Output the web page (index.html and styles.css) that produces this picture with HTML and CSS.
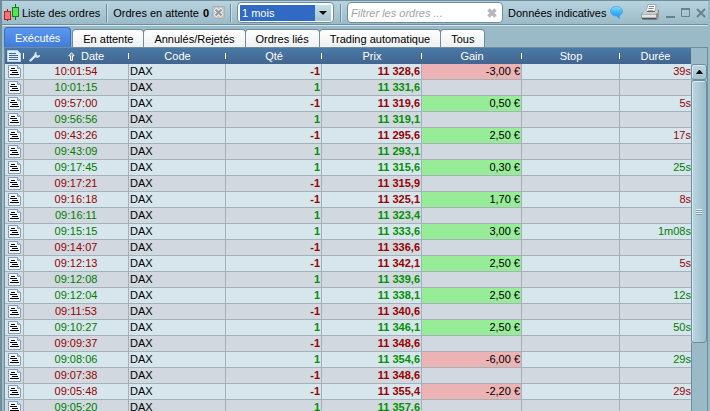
FILE: index.html
```html
<!DOCTYPE html>
<html lang="fr">
<head>
  <meta charset="UTF-8" />
  <meta name="viewport" content="width=device-width, initial-scale=1.0"/>
  <title>Liste des ordres</title>
  <link rel="stylesheet" href="styles.css">
</head>
<body>

  <svg class="defs" aria-hidden="true">
    <symbol id="note" viewBox="0 0 13 13">
      <path d="M.5.5h9l3 3v9H.5z" fill="#f3f8fc" stroke="#7d9fc6"/>
      <path d="M9.5.5v3h3" fill="#c5d8ec" stroke="#7d9fc6"/>
      <path d="M3 3.500h4M2 5.500h7M4 7.500h6M2 9.500h9" stroke="#000"/>
    </symbol>
  </svg>

  <header class="toolbar">
    <svg class="candles" width="16" height="18" viewBox="0 0 16 18">
      <path d="M3.500 5v12" stroke="#a01818"/>
      <rect x=".5" y="7.500" width="6" height="8" fill="#f47474" stroke="#b02020"/>
      <path d="M11.500 0v16" stroke="#107010"/>
      <rect x="8.500" y="3.500" width="6" height="9" fill="#55e455" stroke="#158015"/>
    </svg>
    <h1>Liste des ordres</h1>
    <span class="sep"></span>
    <span>Ordres en attente</span>
    <b class="count">0</b>
    <button class="cancel" aria-label="Annuler les ordres">
      <svg width="13" height="13" viewBox="0 0 13 13">
        <rect x=".5" y=".5" width="12" height="12" rx="1" fill="#bcc2c5" stroke="#a9afb2"/>
        <path d="M3 3l7 7M10 3l-7 7" stroke="#f4f5f5" stroke-width="4"/>
        <path d="M3.500 3.500l6 6M9.500 3.500l-6 6" stroke="#969b9e" stroke-width="2.400"/>
      </svg>
    </button>
    <span class="sep"></span>
    <div class="period">
      <select aria-label="Période">
        <option>1 mois</option>
        <option>3 mois</option>
      </select>
      <svg width="16" height="16" viewBox="0 0 16 16"><path d="M4 6h8l-4 4z" fill="#000"/></svg>
    </div>
    <span class="sep"></span>
    <div class="filter">
      <input type="text" placeholder="Filtrer les ordres ..." aria-label="Filtrer les ordres">
      <button aria-label="Effacer">
        <svg width="10" height="10" viewBox="0 0 10 10"><path d="M1.500 1.500l7 7M8.500 1.500l-7 7" stroke="#b5b9bb" stroke-width="3.400"/></svg>
      </button>
    </div>
    <span class="feed">Données indicatives</span>
    <svg class="bubble" width="13" height="13" viewBox="0 0 13 13">
      <defs>
        <linearGradient id="blue" x1="0" y1="0" x2="0" y2="1">
          <stop offset="0" stop-color="#8adcff"/>
          <stop offset=".45" stop-color="#45b4f4"/>
          <stop offset="1" stop-color="#1898ea"/>
        </linearGradient>
      </defs>
      <path d="M6.500.5c3.400 0 6 2 6 4.800 0 2-1.300 3.500-3.200 4.300V12.500L6.500 10C3.100 10 .5 8.100.5 5.300S3.100.5 6.500.5z" fill="url(#blue)" stroke="#2e9fe6" stroke-width=".6"/>
    </svg>
    <div class="window-buttons">
      <button aria-label="Imprimer">
        <svg width="19" height="17" viewBox="0 0 19 17">
          <path d="M5 8L7 .5h8L14 8z" fill="#fff" stroke="#8b9296" stroke-width=".7"/>
          <path d="M8 2.500h5M7.500 4.500h5M7 6.500h5" stroke="#80878b"/>
          <path d="M3.500 7h13l1.500-2v7l-2 4H2L.5 14V9.500z" fill="#777c7e"/>
          <path d="M3.500 6.500h12L18 8l-3 2H.8z" fill="#c9cccc"/>
          <path d="M6 7.500h8" stroke="#666"/>
          <path d="M1 10.500h14v3H1z" fill="#e4e6e5"/>
          <path d="M1 14.500h14" stroke="#555"/>
          <path d="M15 10.500l3-3v5l-3 3z" fill="#97908a"/>
        </svg>
      </button>
      <button aria-label="Réduire">
        <svg width="9" height="11" viewBox="0 0 9 11"><path d="M0 10h9" stroke="#68818d" stroke-width="2"/></svg>
      </button>
      <button aria-label="Agrandir">
        <svg width="9" height="11" viewBox="0 0 9 11"><path d="M.5 1.500h8v8h-8z" fill="none" stroke="#68818d"/><path d="M0 2h9" stroke="#68818d" stroke-width="2"/></svg>
      </button>
      <button aria-label="Fermer">
        <svg width="10" height="10" viewBox="0 0 10 10"><path d="M1 1l8 8M9 1l-8 8" stroke="#68818d" stroke-width="2"/></svg>
      </button>
    </div>
  </header>

  <nav class="tabs">
    <button class="tab active">Exécutés</button>
    <button class="tab">En attente</button>
    <button class="tab">Annulés/Rejetés</button>
    <button class="tab">Ordres liés</button>
    <button class="tab">Trading automatique</button>
    <button class="tab">Tous</button>
  </nav>

  <main class="panel">
    <div class="list">
      <table>
        <colgroup>
          <col class="c-note"><col class="c-date"><col class="c-code"><col class="c-qty">
          <col class="c-price"><col class="c-gain"><col class="c-stop"><col>
        </colgroup>
        <thead>
          <tr>
            <th aria-label="Note">
              <svg width="14" height="12" viewBox="0 0 14 12">
                <path d="M.5.5h10l3 3v8H.5z" fill="#e4eef8" stroke="#b9d2ea"/>
                <path d="M2 3.500h7M2 5.500h9M2 7.500h9M2 9.500h9" stroke="#3e6696"/>
              </svg>
            </th>
            <th>
              <div class="date-head">
                <svg width="12" height="11" viewBox="0 0 12 11">
                  <path d="M1.500 9.500l5-5" stroke="#dbe8f4" stroke-width="2.400" stroke-linecap="round"/>
                  <path d="M7.500.7v3l1.200.9 2.300-.6c.3 1.700-1.200 3-3 2.800C6 6.600 5 5 5.400 3.200 5.700 1.800 6.500 1 7.500.7z" fill="#dbe8f4"/>
                </svg>
                <svg class="sort" width="7" height="9" viewBox="0 0 7 9"><path d="M3.500.7l2.700 3.100H4.500v4.500h-2V3.800H.8z" fill="#6e90b5" stroke="#fff"/></svg>
                <span>Date</span>
              </div>
            </th>
            <th>Code</th>
            <th>Qté</th>
            <th>Prix</th>
            <th>Gain</th>
            <th>Stop</th>
            <th>Durée</th>
          </tr>
        </thead>
        <tbody id="orders"></tbody>
      </table>
    </div>
    <div class="scrollbar">
      <div class="scroll-up"><svg width="7" height="4" viewBox="0 0 7 4"><path d="M0 4h7L4 0H3z" fill="#000"/></svg></div>
      <div class="thumb">
        <svg width="6" height="6" viewBox="0 0 6 6"><path d="M0 .5h6M0 2.500h6M0 4.500h6" stroke="#e4f1f6"/><path d="M0 1.500h6M0 3.500h6M0 5.500h6" stroke="#7f9dab"/></svg>
      </div>
      <div class="track"></div>
    </div>
  </main>

  <script>
    // time, quantity, price, gain, duration
    const orders = [
      ["10:01:54", -1, "11 328,6", "-3,00 €", "39s"],
      ["10:01:15", 1, "11 331,6"],
      ["09:57:00", -1, "11 319,6", "0,50 €", "5s"],
      ["09:56:56", 1, "11 319,1"],
      ["09:43:26", -1, "11 295,6", "2,50 €", "17s"],
      ["09:43:09", 1, "11 293,1"],
      ["09:17:45", 1, "11 315,6", "0,30 €", "25s"],
      ["09:17:21", -1, "11 315,9"],
      ["09:16:18", -1, "11 325,1", "1,70 €", "8s"],
      ["09:16:11", 1, "11 323,4"],
      ["09:15:15", 1, "11 333,6", "3,00 €", "1m08s"],
      ["09:14:07", -1, "11 336,6"],
      ["09:12:13", -1, "11 342,1", "2,50 €", "5s"],
      ["09:12:08", 1, "11 339,6"],
      ["09:12:04", 1, "11 338,1", "2,50 €", "12s"],
      ["09:11:53", -1, "11 340,6"],
      ["09:10:27", 1, "11 346,1", "2,50 €", "50s"],
      ["09:09:37", -1, "11 348,6"],
      ["09:08:06", 1, "11 354,6", "-6,00 €", "29s"],
      ["09:07:38", -1, "11 348,6"],
      ["09:05:48", -1, "11 355,4", "-2,20 €", "29s"],
      ["09:05:20", 1, "11 357,6"]
    ];

    document.getElementById("orders").innerHTML = orders.map(([time, qty, price, gain = "", duration = ""]) => {
      const gainClass = gain ? (gain.startsWith("-") ? "loss" : "win") : "";
      return `<tr class="${qty < 0 ? "sell" : "buy"}">
        <td class="note"><svg width="13" height="13"><use href="#note"/></svg></td>
        <td class="time">${time}</td>
        <td>DAX</td>
        <td class="num">${qty}</td>
        <td class="num">${price}</td>
        <td class="gain ${gainClass}">${gain}</td>
        <td></td>
        <td class="duration">${duration}</td>
      </tr>`;
    }).join("");
  </script>
</body>
</html>
```
FILE: styles.css
```css
* {
  box-sizing: border-box;
}

body {
  margin: 0;
  height: 100vh;
  display: flex;
  flex-direction: column;
  overflow: hidden;
  font-family: "Liberation Sans", Arial, sans-serif;
  font-size: 11px;
  line-height: 14px;
  color: #000;
  background: #9bbac8;
  border-top: 1px solid #708d9c;
  border-left: 2px solid #708d9c;
}

button, input, select {
  font: inherit;
  color: inherit;
  margin: 0;
  padding: 0;
  border: none;
  background: none;
}

svg {
  display: block;
  flex: none;
}

.defs {
  position: absolute;
  width: 0;
  height: 0;
}

.toolbar {
  flex: none;
  display: flex;
  align-items: center;
  height: 24px;
  margin-right: 2px;
  padding: 0 2px;
  white-space: nowrap;
  background: linear-gradient(#b8d3e0, #9bbac8);
  border-bottom: 1px solid #708d9c;
  box-shadow: 0 1px #d5e5ec;
}

.toolbar h1 {
  margin: 0 1px 0 2px;
  font-size: 11px;
  font-weight: normal;
}

.sep {
  width: 2px;
  height: 18px;
  margin: 0 5px;
  background: #708d9c;
  border-right: 1px solid #c9dfe8;
}

.count {
  margin: 0 3px 0 4px;
}

.period {
  display: grid;
  width: 97px;
  height: 21px;
  margin: 0 1px 0 0;
  padding: 2px;
  background: #fff;
  border: 1px solid #708d9c;
  border-radius: 4px;
}

.period select {
  grid-area: 1 / 1;
  appearance: none;
  padding-left: 2px;
  color: #fff;
  background: linear-gradient(#316ac5, #316ac5) no-repeat left / calc(100% - 16px) 100%, linear-gradient(#c5e0e9, #a4c3cf);
}

.period option {
  color: #000;
}

.period svg {
  grid-area: 1 / 1;
  align-self: center;
  justify-self: end;
  pointer-events: none;
}

.filter {
  display: flex;
  align-items: center;
  width: 156px;
  height: 21px;
  padding: 0 5px 0 3px;
  background: #fff;
  border: 1px solid #708d9c;
  border-radius: 4px;
}

.filter input {
  flex: 1;
  min-width: 0;
  outline: none;
  font-style: italic;
}

.filter input::placeholder {
  color: #a5a5a5;
}

.feed {
  margin: 0 4px 0 5px;
}

.window-buttons {
  display: flex;
  align-items: center;
  gap: 6px;
  margin-left: auto;
}

.tabs {
  flex: none;
  display: flex;
  align-items: flex-end;
  height: 20px;
  margin: 2px 0 0 2px;
}

.tab {
  height: 18px;
  margin-right: -1px;
  padding: 0 10px;
  white-space: nowrap;
  background: linear-gradient(#fff, #eef0f1);
  border: 1px solid #708d9c;
  border-bottom: none;
  border-radius: 4px 4px 0 0;
}

.tab.active {
  height: 20px;
  margin-right: 1px;
  color: #fff;
  background: linear-gradient(#5c98ee, #407cdc);
  border-color: #3b6fc4;
}

.panel {
  flex: 1;
  min-height: 0;
  display: flex;
  margin: 0 2px 0 2px;
  border: 1px solid #708d9c;
  border-width: 1px 1px 0 1px;
}

.list {
  flex: 1;
  min-width: 0;
  overflow: hidden;
}

table {
  width: 100%;
  table-layout: fixed;
  border-collapse: separate;
  border-spacing: 0;
}

.c-note { width: 19px; }
.c-date { width: 105px; }
.c-code { width: 97px; }
.c-qty { width: 96px; }
.c-price { width: 100px; }
.c-gain { width: 100px; }
.c-stop { width: 98px; }

th {
  height: 16px;
  padding: 0;
  font-weight: normal;
  color: #fff;
  background: linear-gradient(#fff, #fff) no-repeat right center / 1px 6px, linear-gradient(#4a79a6, #41658f);
}

th:last-child {
  background: linear-gradient(#4a79a6, #41658f);
}

th:first-child svg {
  margin-left: 2px;
}

.date-head {
  display: flex;
  align-items: center;
  padding-left: 5px;
}

.date-head .sort {
  margin: 0 6px 0 27px;
}

td {
  height: 16px;
  padding: 0 1px;
  line-height: 15px;
  white-space: nowrap;
  border-right: 1px solid #a3b1b8;
  border-bottom: 1px solid #a3b1b8;
  background: #d7e6ed;
}

tr:nth-child(even) td {
  background: #d1d8df;
}

td:last-child {
  border-right: none;
}

.note svg {
  margin-left: 2px;
}

.time {
  text-align: center;
}

.num {
  text-align: right;
  font-weight: bold;
}

.sell .time, .sell .num, .sell .duration { color: #990000; }
.buy .time, .buy .duration { color: #007d00; }
.buy .num { color: #009200; }

.gain {
  text-align: right;
}

.gain.win { background: #97ec97; }
.gain.loss { background: #ebb3b3; }

.duration {
  padding-right: 0;
  text-align: right;
}

.scrollbar {
  flex: none;
  display: flex;
  flex-direction: column;
  width: 16px;
  padding-top: 16px;
}

.scroll-up {
  flex: none;
  display: flex;
  align-items: center;
  justify-content: center;
  height: 16px;
  background: linear-gradient(#bbd8e2, #a2c3cf);
  border: 1px solid #708d9c;
  border-radius: 3px;
  box-shadow: inset 1px 1px #d8eaf0;
}

.thumb {
  flex: 263;
  display: flex;
  align-items: center;
  justify-content: center;
  background: linear-gradient(to right, #bad7e1, #9cbccb);
  border: 1px solid #708d9c;
  border-radius: 3px;
  box-shadow: inset 1px 1px #d8eaf0;
}

.track {
  flex: 68;
  border-left: 1px solid #708d9c;
}
```
